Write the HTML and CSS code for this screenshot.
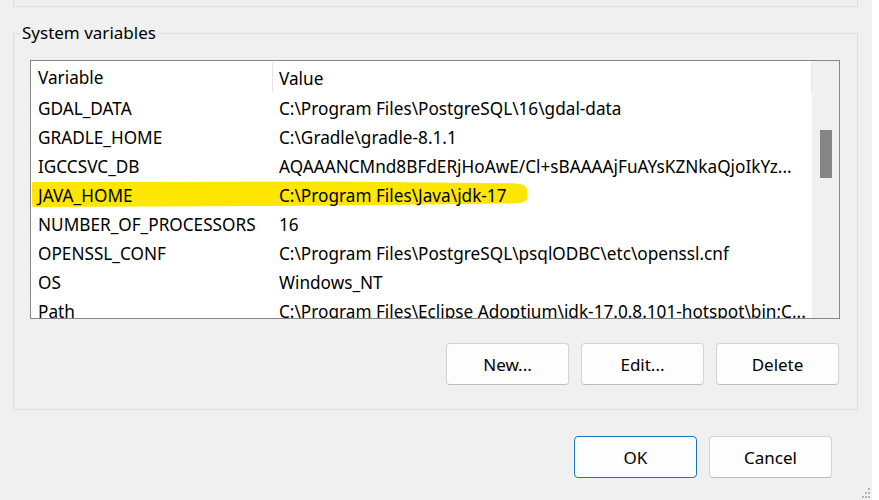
FILE: index.html
```html
<!DOCTYPE html>
<html>
<head>
<meta charset="utf-8">
<title>Environment Variables</title>
<link rel="stylesheet" href="styles.css">
</head>
<body>
<div class="window">
  <div class="prev-group"></div>
  <section class="group">
    <span class="legend">System variables</span>
    <div class="list">
      <div class="list-main">
        <div class="header">
          <div class="c1">Variable</div>
          <div class="c2">Value</div>
        </div>
        <div class="row"><div class="c1">GDAL_DATA</div><div class="c2">C:\Program Files\PostgreSQL\16\gdal-data</div></div>
        <div class="row"><div class="c1">GRADLE_HOME</div><div class="c2">C:\Gradle\gradle-8.1.1</div></div>
        <div class="row"><div class="c1">IGCCSVC_DB</div><div class="c2">AQAAANCMnd8BFdERjHoAwE/Cl+sBAAAAjFuAYsKZNkaQjoIkYz...</div></div>
        <div class="row marked">
          <svg class="marker" width="497" height="27" viewBox="0 0 497 27" aria-hidden="true"><path d="M1 1 L300 0.6 L482 2.2 Q495 3 495.5 9 L495.5 17 Q495 22 482 22.5 L300 24.5 L1 26 Q0 25 0 22 L0 4 Q0 1.2 1 1 Z" fill="#ffe600"/></svg>
          <div class="c1">JAVA_HOME</div><div class="c2">C:\Program Files\Java\jdk-17</div>
        </div>
        <div class="row"><div class="c1">NUMBER_OF_PROCESSORS</div><div class="c2">16</div></div>
        <div class="row"><div class="c1">OPENSSL_CONF</div><div class="c2">C:\Program Files\PostgreSQL\psqlODBC\etc\openssl.cnf</div></div>
        <div class="row"><div class="c1">OS</div><div class="c2">Windows_NT</div></div>
        <div class="row"><div class="c1">Path</div><div class="c2">C:\Program Files\Eclipse Adoptium\jdk-17.0.8.101-hotspot\bin;C...</div></div>
      </div>
      <div class="scrollbar"><div class="thumb"></div></div>
    </div>
    <div class="btn-row">
      <button class="btn">New...</button>
      <button class="btn">Edit...</button>
      <button class="btn">Delete</button>
    </div>
  </section>
  <div class="dlg-row">
    <button class="btn primary">OK</button>
    <button class="btn">Cancel</button>
  </div>
  <svg class="grip" width="12" height="13" viewBox="0 0 12 13" aria-hidden="true">
    <rect x="8" y="1" width="2" height="2" fill="#b4b4b4"/>
    <rect x="5" y="5" width="2" height="2" fill="#b4b4b4"/>
    <rect x="8" y="5" width="2" height="2" fill="#b4b4b4"/>
    <rect x="2" y="9" width="2" height="2" fill="#b4b4b4"/>
    <rect x="5" y="9" width="2" height="2" fill="#b4b4b4"/>
    <rect x="8" y="9" width="2" height="2" fill="#b4b4b4"/>
  </svg>
</div>
</body>
</html>
```

FILE: styles.css
```css
html {
  background: #ffffff;
}
body {
  margin: 0;
  font-family: "Noto Sans", "Open Sans", "DejaVu Sans", sans-serif;
  font-size: 17px;
  color: #000;
}
.window {
  position: relative;
  width: 872px;
  height: 500px;
  background: #f0f0f0;
  overflow: hidden;
}
.prev-group {
  margin-left: 13px;
  width: 845px;
  height: 7px;
  box-sizing: border-box;
  border: 1px solid #dcdcdc;
  border-top: none;
}
.group {
  position: relative;
  margin: 26px 0 0 13px;
  width: 845px;
  height: 377px;
  box-sizing: border-box;
  border: 1px solid #dcdcdc;
  padding: 26px 17px 0 16px;
}
.legend {
  position: absolute;
  top: -13px;
  left: 6px;
  padding: 0 2px;
  line-height: 24px;
  background: #f0f0f0;
}
.list {
  display: flex;
  width: 810px;
  height: 259px;
  box-sizing: border-box;
  border: 1px solid #838790;
  background: #fff;
  overflow: hidden;
  font-size: 17.2px;
}
.list-main {
  flex: 1;
  overflow: hidden;
}
.header {
  display: flex;
  height: 32px;
  padding-top: 1px;
  box-sizing: border-box;
}
.header .c1,
.header .c2 {
  height: 30px;
  display: flex;
  align-items: center;
  border-right: 1px solid #e5e5e5;
}
.c1 {
  width: 242px;
  flex: none;
  box-sizing: border-box;
  padding-left: 7px;
  padding-top: 1px;
  white-space: nowrap;
}
.c2 {
  flex: 1;
  min-width: 0;
  padding-left: 6px;
  padding-top: 1px;
  white-space: nowrap;
  overflow: hidden;
}
.row {
  position: relative;
  display: flex;
  align-items: center;
  height: 29px;
}
.row .c1,
.row .c2 {
  position: relative;
}
.marker {
  position: absolute;
  left: 1px;
  top: 1px;
}
.scrollbar {
  width: 27px;
  flex: none;
  background: #f0f0f0;
  padding: 69px 0 0 8px;
  box-sizing: border-box;
}
.thumb {
  width: 12px;
  height: 48px;
  background: #858585;
}
.btn-row {
  display: flex;
  justify-content: flex-end;
  gap: 12px;
  margin: 24px 1px 0 0;
}
.btn {
  width: 123px;
  height: 42px;
  box-sizing: border-box;
  border: 1px solid #d3d3d3;
  border-bottom-color: #bdbdbd;
  border-radius: 4px;
  background: #fdfdfd;
  font: inherit;
  color: #000;
  padding: 0;
}
.btn.primary {
  border-color: #1a73c8;
}
.dlg-row {
  display: flex;
  justify-content: flex-end;
  gap: 12px;
  margin-top: 26px;
  padding-right: 40px;
}
.grip {
  position: absolute;
  right: 0;
  bottom: 0;
}
```
